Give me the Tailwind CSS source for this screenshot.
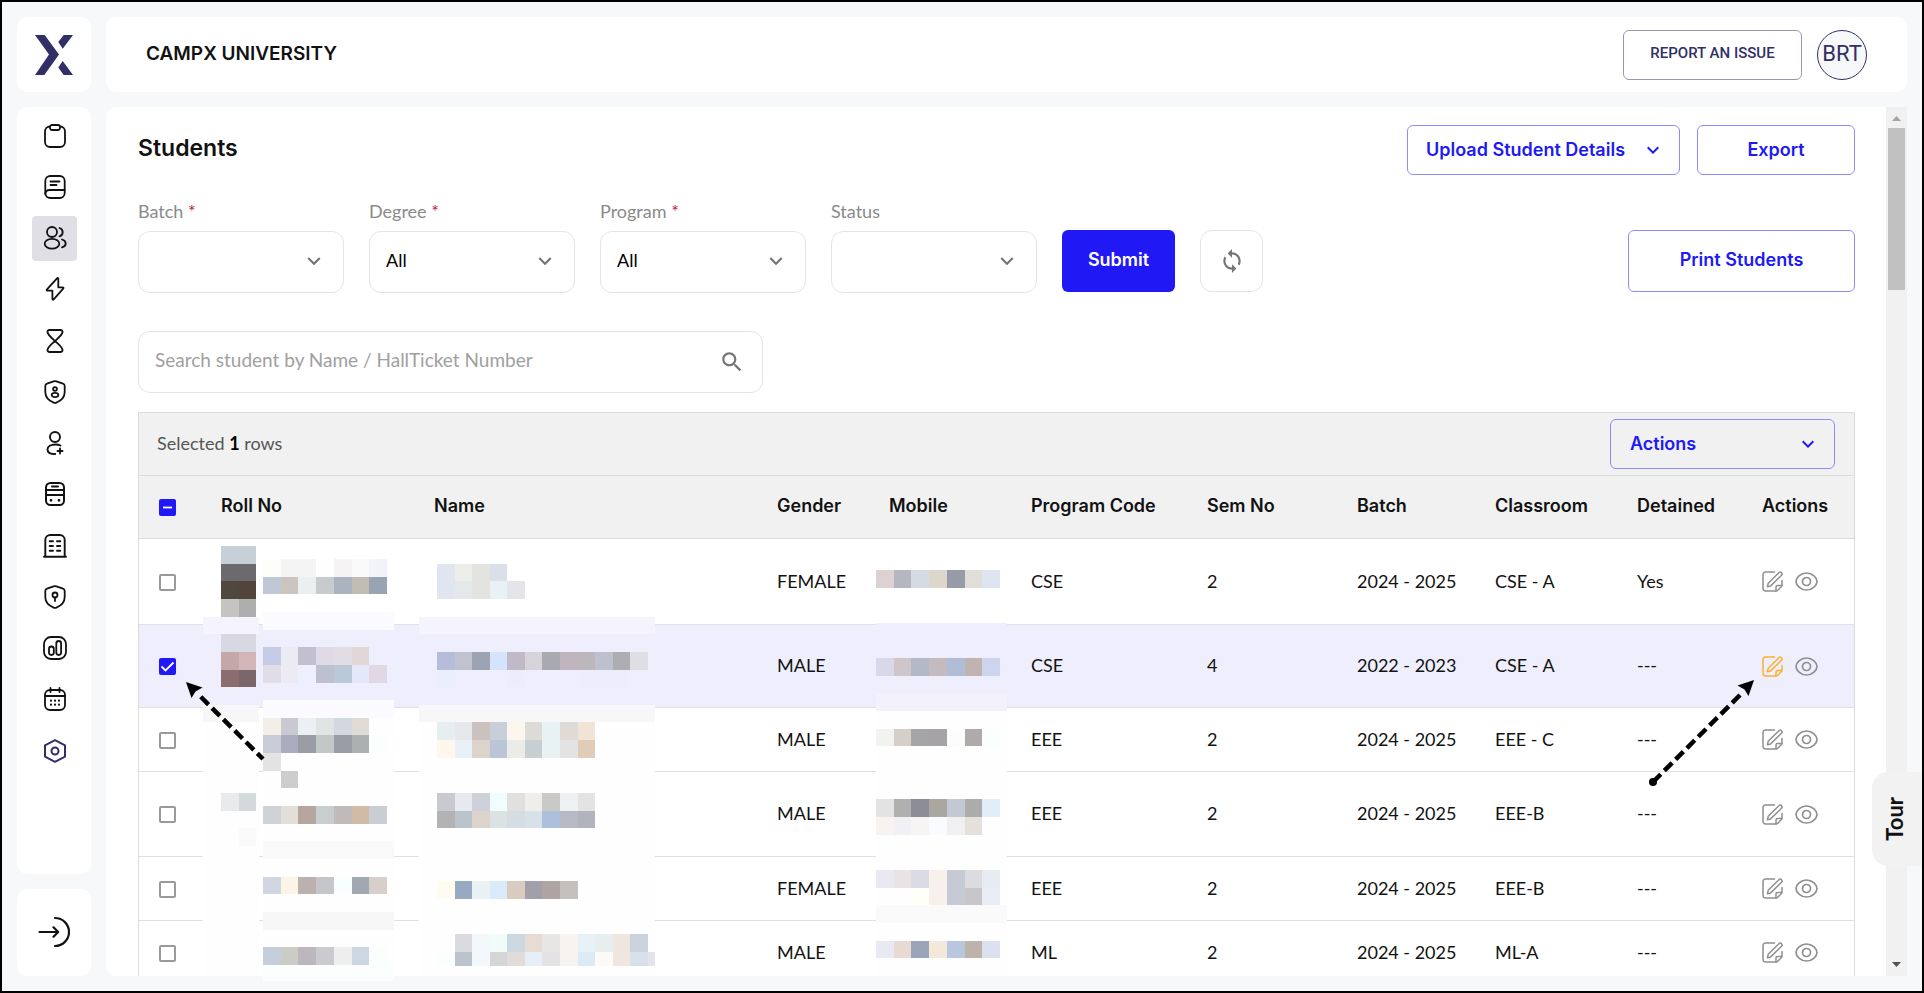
<!DOCTYPE html>
<html lang="en">
<head>
<meta charset="utf-8">
<title>Students</title>
<script src="https://cdn.jsdelivr.net/npm/@tailwindcss/browser@4"></script>
</head>
<body class="relative flex h-screen flex-col gap-[15px] overflow-hidden border-2 border-black bg-[#f7f8fa] p-[15px] font-['Lato',sans-serif] text-lg text-[#121212]">

<svg class="hidden" aria-hidden="true">
  <symbol id="chevron" viewBox="0 0 24 24"><path fill="currentColor" d="M7.41 8.59 12 13.17l4.59-4.58L18 10l-6 6-6-6z"/></symbol>
  <symbol id="edit" viewBox="0 0 21 21"><g fill="none" stroke="currentColor" stroke-width="1.500" stroke-linejoin="round" stroke-linecap="round"><path d="M12.500 1H3.500A2.500 2.500 0 0 0 1 3.500v14A2.500 2.500 0 0 0 3.500 20H14q1 0 1.800-.8l3.400-3.400q.8-.8.8-1.800V9.500"/><path d="M14 20v-4q0-1.500 1.500-1.500H20"/><path d="M6.200 12.300 16.900 1.700a1.800 1.800 0 0 1 2.600 2.600L8.600 14.900l-3.200.8z"/></g></symbol>
  <symbol id="eye" viewBox="0 0 23 19"><g fill="none" stroke="currentColor" stroke-width="1.700"><path d="M1 9.500C1 6 5.500 1 11.500 1S22 6 22 9.500 17.500 18 11.500 18 1 13 1 9.500z"/><circle cx="11.500" cy="9.500" r="4"/></g></symbol>
  <symbol id="shield" viewBox="0 0 24 24"><path d="M10.600 1.300a4 4 0 0 1 2.800 0l6.600 2.400a2.500 2.500 0 0 1 1.700 2.400V12c0 6-4.500 9-8.300 10.600a3.500 3.500 0 0 1-2.800 0C6.800 21 2.300 18 2.300 12V6.100A2.500 2.500 0 0 1 4 3.700z"/></symbol>
</svg>

<div class="flex gap-[15px]">
  <a href="#" aria-label="CampX home" class="flex h-[75px] w-[74px] items-center justify-center rounded-[10px] bg-white">
    <svg class="h-10 w-[38px]" viewBox="0 0 38 40" fill="#312f66"><path d="M0 0h9.700L24 19.500 9.300 40H0l14-20.500zM28.700 0H38L27.700 13.700 23.300 7zM27.700 26 38 40h-9.300l-5.400-7.500z"/></svg>
  </a>
  <header class="flex flex-1 items-center justify-between rounded-[10px] bg-white pr-10 pl-10">
    <h1 class="pb-0.5 font-['Inter',sans-serif] text-[19px] font-semibold">CAMPX UNIVERSITY</h1>
    <div class="flex items-center gap-[15px]">
      <button class="h-[50px] w-[179px] rounded-md border border-[#9897b2] pb-0.5 font-['Roboto',sans-serif] text-[15px] font-medium text-[#312f66]">REPORT AN ISSUE</button>
      <button class="size-[50px] rounded-full border border-[#312f66] bg-[#f7f8fa] font-['Roboto',sans-serif] text-[22px] text-[#312f66]">BRT</button>
    </div>
  </header>
</div>

<div class="flex min-h-0 flex-1 gap-[15px]">
  <aside class="flex w-[74px] flex-col gap-[15px]">
    <nav class="flex-1 rounded-[10px] bg-white pt-1.5 pl-px">
      <div class="flex h-[660px] flex-col items-center justify-between">
        <a href="#" aria-label="Clipboard" class="flex size-[45px] items-center justify-center rounded"><svg class="size-6" viewBox="0 0 24 24" fill="none" stroke="currentColor" stroke-width="1.800"><rect x="2" y="2.500" width="20" height="20.500" rx="5"/><rect x="7" y="1" width="10" height="5" rx="2" fill="white"/></svg></a>
        <a href="#" aria-label="Courses" class="flex size-[45px] items-center justify-center rounded"><svg class="size-6" viewBox="0 0 24 24" fill="none" stroke="currentColor" stroke-width="1.800" stroke-linecap="round"><rect x="2.300" y="1" width="19.400" height="22" rx="5"/><path d="M2.300 19a4 4 0 0 1 4-4h15.400M7.500 6.500h9M7.500 10h6"/></svg></a>
        <a href="#" aria-label="Students" class="flex size-[45px] items-center justify-center rounded bg-[#dfdfe5]"><svg class="size-6" viewBox="0 0 24 24" fill="none" stroke="currentColor" stroke-width="1.800" stroke-linecap="round"><circle cx="9" cy="6" r="5"/><ellipse cx="9" cy="17.700" rx="7.300" ry="4.900"/><path d="M16.500 2a4.300 4.300 0 0 1 0 8.300M19 13.500c2.500.7 3.700 2.200 3.700 3.900s-1.200 3.200-3.700 3.900"/></svg></a>
        <a href="#" aria-label="Quick actions" class="flex size-[45px] items-center justify-center rounded"><svg class="size-6" viewBox="0 0 24 24" fill="none" stroke="currentColor" stroke-width="1.800" stroke-linejoin="round"><path d="M14 1.300 4 12.300c-.6.700-.2 1.300.6 1.300h4.800V22c0 .8.700 1 1.300.4l9.500-10.800c.6-.7.200-1.300-.6-1.300h-4.300V1.800c0-.7-.8-1.100-1.300-.5z"/></svg></a>
        <a href="#" aria-label="Pending" class="flex size-[45px] items-center justify-center rounded"><svg class="size-6" viewBox="0 0 24 24" fill="none" stroke="currentColor" stroke-width="1.900" stroke-linejoin="round"><path d="M6.500 1h11a2 2 0 0 1 2 2.200C19.200 6 14.500 9.700 12 12 9.500 9.700 4.800 6 4.500 3.200A2 2 0 0 1 6.500 1zM6.500 23h11a2 2 0 0 0 2-2.200C19.200 18 14.500 14.300 12 12c-2.500 2.300-7.200 6-7.500 8.800a2 2 0 0 0 2 2.200z"/></svg></a>
        <a href="#" aria-label="Roles" class="flex size-[45px] items-center justify-center rounded"><svg class="size-6" viewBox="0 0 24 24" fill="none" stroke="currentColor" stroke-width="1.800"><use href="#shield"/><circle cx="12" cy="9" r="1.900"/><ellipse cx="12" cy="15" rx="3.300" ry="2.100"/></svg></a>
        <a href="#" aria-label="Add user" class="flex size-[45px] items-center justify-center rounded"><svg class="size-6" viewBox="0 0 24 24" fill="none" stroke="currentColor" stroke-width="1.900" stroke-linecap="round"><circle cx="12" cy="6" r="5"/><path d="M17.500 14.500c-1.400-.7-3.200-1-5-1-4.700 0-8 2-8 4.900 0 2.800 3 4.600 7.700 4.600M17 17.500v5M14.500 20h5"/></svg></a>
        <a href="#" aria-label="Transport" class="flex size-[45px] items-center justify-center rounded"><svg class="size-6" viewBox="0 0 24 24" fill="none" stroke="currentColor" stroke-width="2" stroke-linecap="round"><rect x="3" y="1" width="18" height="22" rx="4.500"/><path d="M3 8h18M3 13h18M9 4.500h6"/><path stroke-width="2.800" d="M8 18.300h.01M16 18.300h.01"/></svg></a>
        <a href="#" aria-label="Departments" class="flex size-[45px] items-center justify-center rounded"><svg class="size-6" viewBox="0 0 24 24" fill="none" stroke="currentColor" stroke-width="1.900" stroke-linecap="round"><path d="M2.300 22.500V6a5 5 0 0 1 5-5h9.400a5 5 0 0 1 5 5v16.500M1 22.800h22M6.700 7.200h3.300M14 7.200h3.300M6.700 12h3.300M14 12h3.300M6.700 16.800h3.300M14 16.800h3.300"/></svg></a>
        <a href="#" aria-label="Permissions" class="flex size-[45px] items-center justify-center rounded"><svg class="size-6" viewBox="0 0 24 24" fill="none" stroke="currentColor" stroke-width="1.800" stroke-linecap="round"><use href="#shield"/><circle cx="12" cy="10" r="2.500"/><path d="M12 12.500v3.500"/></svg></a>
        <a href="#" aria-label="Reports" class="flex size-[45px] items-center justify-center rounded"><svg class="size-6" viewBox="0 0 24 24" fill="none" stroke="currentColor" stroke-width="1.800"><rect x="1" y="1" width="22" height="22" rx="7"/><rect x="6" y="10.500" width="4.800" height="8.500" rx="2.400"/><rect x="13.300" y="5" width="4.800" height="14" rx="2.400"/></svg></a>
        <a href="#" aria-label="Calendar" class="flex size-[45px] items-center justify-center rounded"><svg class="size-6" viewBox="0 0 24 24" fill="none" stroke="currentColor" stroke-width="1.800" stroke-linecap="round"><rect x="2" y="3" width="20" height="20" rx="5"/><path d="M2 9h20M7.500 1v4M16.500 1v4"/><path stroke-width="2.200" d="M8 13.700h.01M12 13.700h.01M16 13.700h.01M8 17.700h.01M12 17.700h.01M16 17.700h.01"/></svg></a>
        <a href="#" aria-label="Settings" class="flex size-[45px] items-center justify-center rounded text-[#312f66]"><svg class="size-6" viewBox="0 0 24 24" fill="none" stroke="currentColor" stroke-width="2" stroke-linejoin="round"><path d="M12 1.200 22 6.400v11.200l-10 5.200-10-5.200V6.400z"/><circle cx="12" cy="12" r="3.500"/></svg></a>
      </div>
    </nav>
    <button aria-label="Log out" class="flex h-[87px] items-center justify-center rounded-[10px] bg-white pb-0.5"><svg class="size-8" viewBox="0 0 32 32" fill="none" stroke="currentColor" stroke-width="2.200" stroke-linecap="round" stroke-linejoin="round"><path d="M1.500 16H20M15.500 11.300l4.700 4.700-4.700 4.700M17 2a14 14 0 0 1 0 28"/></svg></button>
  </aside>

  <div class="flex min-w-0 flex-1 overflow-hidden rounded-l-[10px] bg-white">
    <main class="min-w-0 flex-1 overflow-hidden pt-[18px] pr-[31px] pl-8">
      <div class="flex items-center justify-between">
        <h2 class="pb-0.5 font-['Inter',sans-serif] text-[23px] font-semibold">Students</h2>
        <div class="flex gap-[17px] font-['Inter',sans-serif] font-semibold text-[#2019f5]">
          <button class="flex h-[50px] w-[273px] items-center justify-between rounded-md border border-[#8f8cfa] pr-[14px] pl-[18px]">Upload Student Details <svg class="size-6"><use href="#chevron"/></svg></button>
          <button class="h-[50px] w-[158px] rounded-md border border-[#8f8cfa]">Export</button>
        </div>
      </div>

      <form class="mt-[25px] flex items-end gap-[25px]" onsubmit="return false">
        <div class="flex w-[206px] flex-col gap-[9px]">
          <label for="batch" class="leading-[22px] text-[#8a8a8a]">Batch <span class="text-[#c0173c]">*</span></label>
          <div class="relative"><select id="batch" class="h-[62px] w-full appearance-none rounded-xl border border-[#e4e4e4] bg-white pb-1 pl-4 text-black"><option></option></select><svg class="pointer-events-none absolute top-[17px] right-[17px] size-[26px] text-[#757575]"><use href="#chevron"/></svg></div>
        </div>
        <div class="flex w-[206px] flex-col gap-[9px]">
          <label for="degree" class="leading-[22px] text-[#8a8a8a]">Degree <span class="text-[#c0173c]">*</span></label>
          <div class="relative"><select id="degree" class="h-[62px] w-full appearance-none rounded-xl border border-[#e4e4e4] bg-white pb-1 pl-4 text-black"><option>All</option></select><svg class="pointer-events-none absolute top-[17px] right-[17px] size-[26px] text-[#757575]"><use href="#chevron"/></svg></div>
        </div>
        <div class="flex w-[206px] flex-col gap-[9px]">
          <label for="program" class="leading-[22px] text-[#8a8a8a]">Program <span class="text-[#c0173c]">*</span></label>
          <div class="relative"><select id="program" class="h-[62px] w-full appearance-none rounded-xl border border-[#e4e4e4] bg-white pb-1 pl-4 text-black"><option>All</option></select><svg class="pointer-events-none absolute top-[17px] right-[17px] size-[26px] text-[#757575]"><use href="#chevron"/></svg></div>
        </div>
        <div class="flex w-[206px] flex-col gap-[9px]">
          <label for="status" class="leading-[22px] text-[#8a8a8a]">Status</label>
          <div class="relative"><select id="status" class="h-[62px] w-full appearance-none rounded-xl border border-[#e4e4e4] bg-white pb-1 pl-4 text-black"><option></option></select><svg class="pointer-events-none absolute top-[17px] right-[17px] size-[26px] text-[#757575]"><use href="#chevron"/></svg></div>
        </div>
        <button class="mb-px h-[62px] w-[113px] rounded-md bg-[#2019f5] pb-0.5 font-['Inter',sans-serif] font-semibold text-white">Submit</button>
        <button aria-label="Reset filters" class="mb-px flex h-[62px] w-[63px] items-center justify-center rounded-xl border border-[#e4e4e4] text-[#757575]"><svg class="size-[26px]" viewBox="0 0 24 24" fill="currentColor"><path d="M12 4V1L8 5l4 4V6c3.310 0 6 2.690 6 6 0 1.010-.25 1.970-.7 2.800l1.460 1.460C19.540 15.030 20 13.570 20 12c0-4.420-3.580-8-8-8m0 14c-3.310 0-6-2.690-6-6 0-1.010.25-1.970.7-2.800L5.240 7.740C4.460 8.970 4 10.430 4 12c0 4.420 3.580 8 8 8v3l4-4-4-4z"/></svg></button>
        <button class="mb-px ml-auto h-[62px] w-[227px] rounded-md border border-[#8f8cfa] pb-0.5 font-['Inter',sans-serif] font-semibold text-[#2019f5]">Print Students</button>
      </form>

      <label class="mt-[38px] flex h-[62px] w-[625px] items-center rounded-xl border border-[#e4e4e4] pr-[17px] pl-4">
        <input type="text" aria-label="Search student" placeholder="Search student by Name / HallTicket Number" class="min-w-0 flex-1 pb-1 text-[19px] outline-none placeholder:text-[#a0a0a0]">
        <svg class="size-[26px] text-[#757575]" viewBox="0 0 24 24" fill="currentColor"><path d="M15.500 14h-.79l-.28-.27C15.410 12.590 16 11.110 16 9.500 16 5.910 13.090 3 9.500 3S3 5.910 3 9.500 5.910 16 9.500 16c1.610 0 3.090-.59 4.230-1.570l.27.28v.79l5 4.990L20.490 19zm-6 0C7.010 14 5 11.990 5 9.500S7.010 5 9.500 5 14 7.010 14 9.500 11.990 14 9.500 14"/></svg>
      </label>

      <section class="mt-[19px] border border-[#dcdcdc]">
        <div class="flex h-[62px] items-center justify-between bg-[#f1f1f1] pr-[19px] pl-[18px]">
          <p class="pb-0.5 text-[#555]">Selected <b class="text-black">1</b> rows</p>
          <button class="flex h-[50px] w-[225px] items-center justify-between rounded-md border border-[#8f8cfa] pr-[14px] pl-[19px] font-['Inter',sans-serif] font-semibold text-[#2019f5]">Actions <svg class="size-6"><use href="#chevron"/></svg></button>
        </div>
        <table class="w-full table-fixed border-collapse text-left">
          <colgroup><col class="w-[66px]"><col class="w-[213px]"><col class="w-[343px]"><col class="w-[112px]"><col class="w-[142px]"><col class="w-[176px]"><col class="w-[150px]"><col class="w-[138px]"><col class="w-[142px]"><col class="w-[125px]"><col class="w-[108px]"></colgroup>
          <thead>
            <tr class="h-[63px] border-y border-[#dcdcdc] bg-[#f1f1f1] font-['Inter',sans-serif]">
              <th class="pl-5"><div class="grid size-[17px] place-items-center"><input type="checkbox" aria-label="Select all rows" checked class="col-start-1 row-start-1 size-[17px] appearance-none rounded-[2px] bg-[#2019f5]"><svg class="pointer-events-none col-start-1 row-start-1 size-[17px]" viewBox="0 0 17 17" fill="none" stroke="white" stroke-width="1.800"><path d="M4 8.500h9"/></svg></div></th>
              <th class="pb-0.5 pl-4 font-semibold">Roll No</th><th class="pb-0.5 pl-4 font-semibold">Name</th><th class="pb-0.5 pl-4 font-semibold">Gender</th><th class="pb-0.5 pl-4 font-semibold">Mobile</th><th class="pb-0.5 pl-4 font-semibold">Program Code</th><th class="pb-0.5 pl-4 font-semibold">Sem No</th><th class="pb-0.5 pl-4 font-semibold">Batch</th><th class="pb-0.5 pl-4 font-semibold">Classroom</th><th class="pb-0.5 pl-4 font-semibold">Detained</th><th class="pb-0.5 pl-4 font-semibold">Actions</th>
            </tr>
          </thead>
          <tbody id="rows"></tbody>
        </table>
      </section>
    </main>

    <div class="flex w-[21px] flex-col items-center justify-between bg-[#f1f1f1] pt-[9px] pb-[9px]" aria-hidden="true">
      <div class="flex flex-col items-center gap-[7px]">
        <svg class="h-[5px] w-[9px]" viewBox="0 0 9 5" fill="#a3a3a3"><path d="M4.500 0 9 5H0z"/></svg>
        <div class="h-[162px] w-[17px] bg-[#c1c1c1]"></div>
      </div>
      <svg class="h-[5px] w-[9px]" viewBox="0 0 9 5" fill="#505050"><path d="M4.500 5 9 0H0z"/></svg>
    </div>
  </div>
</div>

<!-- Redacted cells and pointer arrows, laid over the table -->
<svg id="overlay" class="pointer-events-none absolute -top-0.5 -left-0.5 h-[993px] w-[1924px]" viewBox="0 0 1924 993" aria-hidden="true">
  <g id="mosaic" shape-rendering="crispEdges"></g>
  <g stroke="black" stroke-width="4.500" fill="black">
    <path d="M263 759 199 695" stroke-dasharray="11 5" stroke-dashoffset="3" fill="none"/>
    <path d="M186 682 202.500 687.500 195.500 691.500 191.500 698z" stroke="none"/>
    <path d="M1653 782 1743 692" stroke-dasharray="11 5" fill="none"/>
    <circle cx="1653" cy="782" r="4" stroke="none"/>
    <path d="M1754 680 1737.500 685.500 1744.500 689.500 1748.500 696z" stroke="none"/>
  </g>
</svg>

<button class="absolute right-0 bottom-[125px] flex h-[94px] w-[50px] items-center justify-center rounded-l-2xl bg-[#f2f2f2] pr-1"><span class="rotate-180 text-[22px] font-bold [writing-mode:vertical-rl]">Tour</span></button>

<script>
const students = [
  ["FEMALE", "CSE", "2", "2024 - 2025", "CSE - A", "Yes", "h-[86px]", false],
  ["MALE", "CSE", "4", "2022 - 2023", "CSE - A", "---", "h-[83px] bg-[#efeefd]", true],
  ["MALE", "EEE", "2", "2024 - 2025", "EEE - C", "---", "h-[64px]", false],
  ["MALE", "EEE", "2", "2024 - 2025", "EEE-B", "---", "h-[85px]", false],
  ["FEMALE", "EEE", "2", "2024 - 2025", "EEE-B", "---", "h-[64px]", false],
  ["MALE", "ML", "2", "2024 - 2025", "ML-A", "---", "h-[64px]", false],
];
const td = t => `<td class="pb-0.5 pl-4">${t}</td>`;
document.getElementById("rows").innerHTML = students.map(([gender, code, sem, batch, room, detained, row, on], i) => `
  <tr class="border-b border-[#e0e0e0] ${row}">
    <td class="pt-px pl-5"><div class="grid size-[17px] place-items-center"><input type="checkbox" aria-label="Select row ${i + 1}" ${on ? "checked" : ""} class="col-start-1 row-start-1 size-[17px] appearance-none rounded-[2px] border-2 border-[#9a9a9a] bg-white checked:border-[#2019f5] checked:bg-[#2019f5]">${on ? '<svg class="pointer-events-none col-start-1 row-start-1 size-[17px]" viewBox="0 0 17 17" fill="none" stroke="white" stroke-width="1.800"><path d="M2.500 8.500 6.500 12.500 14.500 4.500"/></svg>' : ""}</div></td>
    ${td("")}${td("")}${td(gender)}${td("")}${[code, sem, batch, room, detained].map(td).join("")}
    <td class="pl-4"><div class="flex items-center gap-3 text-[#8f8f8f]"><button aria-label="Edit" class="${on ? "text-[#fbb02d]" : ""}"><svg class="size-[21px]"><use href="#edit"/></svg></button><button aria-label="View"><svg class="h-[19px] w-[23px]"><use href="#eye"/></svg></button></div></td>
  </tr>`).join("");

const blocks = [];
const rect = (x, y, w, h, c) => blocks.push(`<rect x="${x}" y="${y}" width="${w}" height="${h}" fill="#${c}"/>`);
const strip = (x0, y, h, colors) => colors.split(" ").forEach((c, k) => {
  if (c === "-") return;
  const step = x0 === 437 ? 17.58 : 17.7;
  const a = Math.round(x0 + step * k), b = Math.round(x0 + step * (k + 1));
  rect(a, y, b - a, h, c);
});
// Plain patches that hide the row lines
rect(203, 722, 56, 254, "fefefe"); rect(203, 617, 56, 17, "f4f3fe"); rect(203, 634, 56, 71, "efeefd"); rect(203, 705, 56, 17, "f7f7f7");
rect(263, 612, 131, 18, "fafaff"); rect(263, 700, 131, 18, "fafaff"); rect(263, 718, 131, 258, "fefefe"); rect(263, 841, 131, 18, "f9f9f9"); rect(263, 912, 131, 18, "f7f7f7"); rect(263, 965, 131, 16, "fcfefd");
rect(419, 617, 236, 17, "f4f3fe"); rect(419, 705, 236, 17, "f7f7f7"); rect(419, 722, 236, 254, "fefefe");
rect(876, 623, 131, 17, "efeefd"); rect(876, 694, 131, 17, "f2f1fc"); rect(876, 711, 131, 265, "fefefe"); rect(876, 905, 131, 18, "fafafa");
// Photo
strip(221, 546, 18, "c7cfd8 c7d0d7"); strip(221, 564, 17, "6b6a6e 6b6a6e"); strip(221, 581, 18, "50483e 52443a"); strip(221, 599, 18, "c5c4c1 aeaeae");
strip(221, 634, 18, "d7d8e1 d7d8e1"); strip(221, 652, 18, "c4a8a8 d5b6b8"); strip(221, 670, 17, "8b6c6f 7a666b");
strip(221, 793, 18, "e8eaec d4d9db"); strip(221, 828, 18, "- fafafa");
// Roll number
strip(263, 559, 18, "fdfdfb f4f4f4 f4f4f4 fefefe f5f3f4 fafafa f2f3f8"); strip(263, 577, 17, "bec8d6 cac5be eaf0f0 c8cbce a9b4be c2bdb3 98a4b2");
strip(263, 647, 18, "c5cae5 ecebf4 c2c0ce e0dae6 e2dde4 e0d7d6"); strip(263, 665, 18, "e0dde8 ecebf4 eeeffd bdc0cf bbc8da e5e8f9 e0d8e4");
strip(263, 718, 17, "f3eee7 c9c9d2 eaf0f3 dfe5e4 d1d8e0 e0dbd4"); strip(263, 735, 18, "c9ccd7 abacc0 9b9da5 c0c9c8 9a9da6 acb0b1 fafffe");
strip(263, 753, 18, "e3e3e3"); strip(263, 771, 17, "- cdcdcd");
strip(263, 806, 18, "cfd3d7 e1dfd8 b7a69e c8cdd0 c1babb cfbba6 cacdd3");
strip(263, 877, 17, "cfd6e1 fcf4e6 bbb1af c5c6ca f9fffe a2a8b2 d8cfcd");
strip(263, 947, 18, "c5cfdc ccccc6 bcb7bc cbcbcf eeeeee cdd7e2 fafffe");
// Name
strip(437, 564, 17, "e1e5ef edeeea e3e4df dbdfe8"); strip(437, 581, 18, "e0e5f2 e4e8e8 e3e4df e8f2f5 e5e4eb");
strip(437, 652, 18, "b6bdda c1c2d0 9ca3b2 d4e4fb c0b9c7 d6d4da a9a9b1 c0b4bf bcb7bd bfc0cd aeadb3 e0dee5"); strip(437, 670, 17, "ebeefd efeefc efeefc efeefd edecfb efeefc efeefd efeefd eeedfb eeedfb eeedfb");
strip(437, 722, 18, "e7eef0 e7e8eb cbc1bf c8cfd9 fcf6ef dcdbd7 e9f2f3 dfdad5 f1e3d5"); strip(437, 740, 18, "fff6ec e8f0f8 dcd3cd bac6d8 ebece8 c8cfd2 e8f2f3 e4e3e4 e1ccb8");
strip(437, 793, 18, "c9cad0 e6eaf0 ced1d9 f2fbfe e1e0df efeee9 cac9c6 edf1f4 e3e3e3"); strip(437, 811, 17, "b3b3b3 bbc4cc dcd3cd dae2e3 d5dde3 d6e2e8 adc0db b7bac4 b1b3bd");
strip(437, 881, 18, "fffbf0 98a9c2 e9f1f4 d9ebfb dacbc0 a19fa9 afa4a3 c4c1bc");
strip(437, 934, 18, "- dadbe0 f3f8fb f1fbf9 cbd8e2 e6dcd3 e7e6e4 f8f3ef e6f2f8 e7eef0 efe6e0 cad4df"); strip(437, 952, 14, "fafffe bcc3cc f3f8fb d4d6d5 e1dcd7 e4eff8 e4e2e4 f8f3ef dceaf6 fbfaf7 efe6e0 d8e1eb"); rect(648, 952, 7, 14, "e4e4e9");
// Mobile
strip(876, 570, 18, "dbd2d1 b4b6c0 d4dbe2 dcd6cb 979aa7 e1ded9 dee5f1");
strip(876, 658, 18, "d7d9ea cfc6ca b4b9c7 c3bbbd b1bdd6 c0b3b0 cdd4ed");
strip(876, 729, 17, "f2f2ee d7cec8 a5a4a9 a6a2a5 fcfcfc b0aaaa fafffe");
strip(876, 799, 18, "e3e3e3 b0b0b0 8b8d96 aaa7a1 c3c9d3 acacac e1edf7"); strip(876, 817, 18, "f7f3f0 f1f1f5 f6f5f4 f9fbfe f0f0f0 e5e0d9");
strip(876, 870, 18, "e8e9f3 e9e3e4 dadce5 faf0eb c6cad4 dcdce0 e8ebf1"); strip(876, 888, 17, "- fefefe fefff9 faf0eb c6cad4 c9c6ca e9edf6");
strip(876, 941, 17, "e8e9f2 e8dad3 9aa5ba f3e8d9 b9c7de beb3aa dbe1ef");
document.getElementById("mosaic").innerHTML = blocks.join("");
</script>
</body>
</html>
